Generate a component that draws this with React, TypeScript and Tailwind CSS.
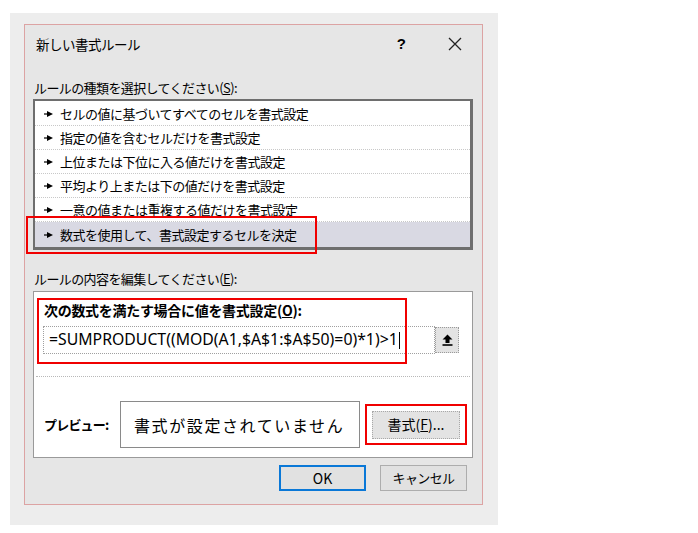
const jp = { fontFamily: '"Noto Sans CJK JP", "Noto Sans", sans-serif' };

const Arrow = () => (
  <svg width="9" height="6" viewBox="0 0 9 6" className="shrink-0">
    <rect x="0" y="2.4" width="4" height="1.2" fill="#000" />
    <path d="M3 0 L9 3 L3 6 Z" fill="#000" />
  </svg>
);

const rules = [
  "セルの値に基づいてすべてのセルを書式設定",
  "指定の値を含むセルだけを書式設定",
  "上位または下位に入る値だけを書式設定",
  "平均より上または下の値だけを書式設定",
  "一意の値または重複する値だけを書式設定",
  "数式を使用して、書式設定するセルを決定",
];

const App = () => {
  return (
    <div className="relative w-[698px] h-[533px] bg-white overflow-hidden text-black" style={jp}>
      {/* dithered shadow area */}
      <div className="ml-[10px] mt-[13px] w-[488px] h-[512px] bg-[#ededed] pl-[14px] pt-[11px]">
        {/* dialog */}
        <div className="w-[459px] h-[481px] border border-[#dca3a3] bg-[#e6e6e6] flex flex-col">
          {/* title bar */}
          <div className="h-[36px] flex items-center pl-[11px] pr-[20px] pt-[2px]">
            <span className="text-[13.5px] tracking-[-0.5px]">新しい書式ルール</span>
            <span className="ml-auto mr-[42px] text-[15px] font-bold" style={{ fontFamily: '"Liberation Sans", sans-serif' }}>?</span>
            <svg width="14" height="14" viewBox="0 0 14 14">
              <path d="M1 1 L13 13 M13 1 L1 13" stroke="#222" strokeWidth="1.3" />
            </svg>
          </div>

          <div className="px-[8px] flex flex-col">
            <div className="h-[38px] flex items-end pb-[2px] pl-[1px] text-[13px] tracking-[-0.6px]">
              ルールの種類を選択してください(<span className="underline">S</span>):
            </div>

            {/* rule list */}
            <div className="w-[440px] h-[151px] bg-white border-2 border-[#6e6e6e] border-r-[3px] border-b-[3px] pt-[1px]">
              {rules.map((r, i) => (
                <div
                  key={r}
                  className={
                    i === rules.length - 1
                      ? "h-[25px] flex items-center gap-[7px] pl-[9px] bg-[#d9d9e3] text-[13px] tracking-[-0.5px]"
                      : "h-[24px] flex items-center gap-[7px] pl-[9px] border-b border-dotted border-[#c8c8c8] text-[13px] tracking-[-0.5px]"
                  }
                >
                  <Arrow />
                  <span>{r}</span>
                </div>
              ))}
            </div>

            <div className="h-[41px] flex items-end pb-[3px] pl-[1px] text-[13px] tracking-[-0.6px]">
              ルールの内容を編集してください(<span className="underline">E</span>):
            </div>

            {/* edit panel */}
            <div className="w-[440px] h-[167px] bg-white border border-[#9a9a9a] flex flex-col">
              <div className="h-[34px] flex items-center pl-[10px] pt-[2px] text-[14px] font-bold tracking-[-0.3px]">
                次の数式を満たす場合に値を書式設定(<span className="underline">O</span>):
              </div>
              <div className="flex items-center pl-[9px]">
                <div className="w-[392px] h-[28px] border border-dotted border-[#a0a0a0] flex items-center pl-[5px] text-[15.8px]" style={{ fontFamily: '"Noto Sans", sans-serif' }}>
                  <span>=SUMPRODUCT((MOD(A1,$A$1:$A$50)=0)*1)&gt;1</span>
                  <span className="w-[1px] h-[17px] bg-black ml-[1px]" />
                </div>
                <div className="w-[24px] h-[26px] bg-[#e3e3e3] border border-dotted border-[#9a9a9a] flex items-center justify-center">
                  <svg width="11" height="12" viewBox="0 0 11 12">
                    <path d="M5.5 0.5 L10.5 5.5 L7.5 5.5 L7.5 9 L3.5 9 L3.5 5.5 L0.5 5.5 Z" fill="#000" />
                    <rect x="0.5" y="10.2" width="10" height="1.6" fill="#000" />
                  </svg>
                </div>
              </div>
              <div className="mt-[22px] mx-[2px] border-t border-dotted border-[#b8b8b8]" />
              <div className="flex items-center mt-[24px] pl-[10px]">
                <span className="w-[76px] text-[13px] font-bold tracking-[-0.8px]">プレビュー:</span>
                <div className="w-[240px] h-[47px] border border-[#8a8a8a] flex items-center pl-[13px] text-[16px] tracking-[1.6px]">
                  書式が設定されていません
                </div>
                <div className="ml-[12px] w-[88px] h-[28px] bg-[#e3e3e3] border border-dotted border-[#a8a8a8] flex items-center justify-center text-[14px]">
                  書式(<span className="underline">F</span>)...
                </div>
              </div>
            </div>

            {/* buttons */}
            <div className="flex justify-end gap-[14px] mt-[7px] pr-[7px]">
              <div className="w-[87px] h-[26px] bg-[#e1e1e1] border-2 border-[#0a78d7] flex items-center justify-center text-[14px]">
                OK
              </div>
              <div className="w-[87px] h-[26px] bg-[#e1e1e1] border border-[#adadad] flex items-center justify-center text-[13px] tracking-[-0.6px]">
                キャンセル
              </div>
            </div>
          </div>
        </div>
      </div>

      {/* red annotation boxes */}
      <div className="absolute left-[26px] top-[216px] w-[291px] h-[38px] border-2 border-[#f00000]" />
      <div className="absolute left-[37px] top-[298px] w-[370px] h-[66px] border-2 border-[#f00000]" />
      <div className="absolute left-[365px] top-[404px] w-[102px] h-[41px] border-2 border-[#f00000]" />
    </div>
  );
};

export default App;
